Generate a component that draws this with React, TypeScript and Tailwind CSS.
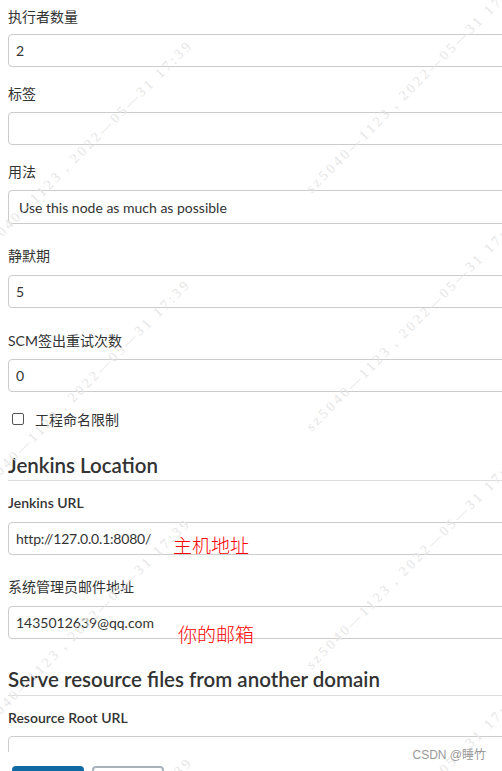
import React from "react"

const font = "font-['Lato','Noto_Sans_CJK_SC',sans-serif]"

// watermark centres
const marks = [
  { x: 85, y: 148 },
  { x: 83, y: 387 },
  { x: 83, y: 626 },
  { x: 85, y: 865 },
  { x: 414, y: 85 },
  { x: 414, y: 323 },
  { x: 414, y: 561 },
  { x: 414, y: 799 },
]

function Label({ children, className = "" }: { children: React.ReactNode; className?: string }) {
  return <div className={`h-5 text-[14px] leading-5 text-[#333] ${className}`}>{children}</div>
}

function Field({ value, className = "" }: { value?: string; className?: string }) {
  return (
    <div
      className={`flex h-[33px] w-[560px] items-center rounded-[4px] border border-[#ccc] bg-white px-[7px] text-[14px] text-[#333] ${className}`}
    >
      {value}
    </div>
  )
}

export default function App() {
  return (
    <div className={`relative h-[771px] w-[502px] overflow-hidden bg-white ${font}`}>
      <div className="w-[600px] pl-2 pt-[7px]">
        <Label>执行者数量</Label>
        <Field value="2" className="mt-[7px]" />

        <Label className="mt-[17px]">标签</Label>
        <Field className="mt-2" />

        <Label className="mt-[17px]">用法</Label>
        <Field value="Use this node as much as possible" className="mt-2 h-[34px] px-[10px]" />

        <Label className="mt-[22px]">静默期</Label>
        <Field value="5" className="mt-[9px]" />

        <Label className="mt-[23px]">SCM签出重试次数</Label>
        <Field value="0" className="mt-2" />

        <label className="mt-[17px] flex h-5 items-center pl-1 text-[14px] text-[#333]">
          <span className="h-3 w-3 rounded-[2px] border border-[#555] bg-white" />
          <span className="ml-[11px]">工程命名限制</span>
        </label>

        <h2 className="mt-[22px] h-[30px] w-[560px] border-b border-[#ddd] text-[20.5px] font-semibold leading-[28px] text-[#333]">
          Jenkins Location
        </h2>

        <Label className="mt-3 font-semibold">Jenkins URL</Label>
        <Field value="http://127.0.0.1:8080/" className="mt-[9px] tracking-[-0.2px]" />

        <Label className="mt-[22px]">系统管理员邮件地址</Label>
        <Field value="1435012639@qq.com" className="mt-[9px]" />

        <h2 className="mt-[26px] h-[31px] w-[560px] border-b border-[#ddd] text-[20.5px] font-semibold leading-[28px] text-[#333]">
          Serve resource files from another domain
        </h2>

        <Label className="mt-3 font-semibold">Resource Root URL</Label>
        <div className="mt-2 h-4 overflow-hidden">
          <Field />
        </div>

        <div className="flex gap-2 pl-1 pt-[14px]">
          <div className="h-8 w-[72px] rounded-[4px] bg-[#0f6aa3]" />
          <div className="h-8 w-[72px] rounded-[4px] border-2 border-[#a9b1bb] bg-white" />
        </div>
      </div>

      {marks.map((m, i) => (
        <span
          key={i}
          className="pointer-events-none absolute -translate-x-1/2 -translate-y-1/2 -rotate-45 whitespace-nowrap font-['Liberation_Serif',serif] text-[14px] tracking-[3px] text-[#e6e6e6]"
          style={{ left: m.x, top: m.y }}
        >
          sz5040—1123，2022—05—31 17:39
        </span>
      ))}

      <span className="pointer-events-none absolute left-[173px] top-[535px] font-['Noto_Sans_CJK_SC',serif] text-[19px] font-light leading-none text-[#f00]">
        主机地址
      </span>
      <span className="pointer-events-none absolute left-[178px] top-[624px] font-['Noto_Sans_CJK_SC',serif] text-[19px] font-light leading-none text-[#f00]">
        你的邮箱
      </span>

      <span className="absolute bottom-[7px] right-[16px] font-['Liberation_Sans','Noto_Sans_CJK_SC',sans-serif] text-[12px] text-[#999]">
        CSDN @睡竹
      </span>
    </div>
  )
}
